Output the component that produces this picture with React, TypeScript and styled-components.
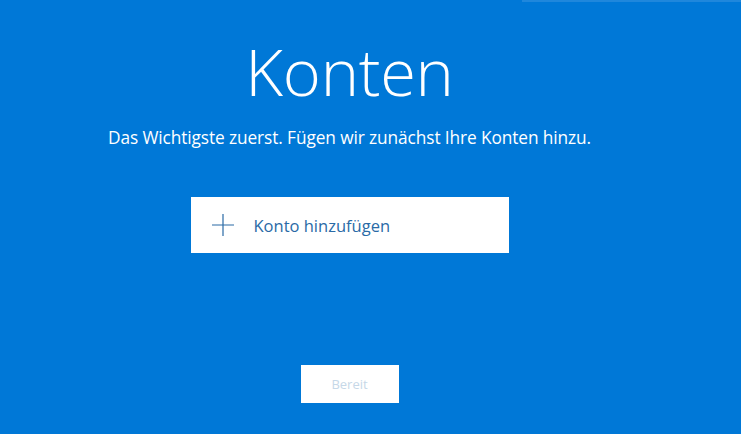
import React from 'react'
import styled, { createGlobalStyle } from 'styled-components'

const GlobalStyle = createGlobalStyle`
  html, body {
    margin: 0;
    padding: 0;
    background: #0078d7;
  }
  body {
    font-family: "Open Sans", "Noto Sans", sans-serif;
  }
`

const Screen = styled.div`
  position: relative;
  width: 741px;
  height: 434px;
  background: #0078d7;
  overflow: hidden;
`

const TopStrip = styled.div`
  position: absolute;
  top: 0;
  left: 522px;
  right: 0;
  height: 2px;
  background: #1f87dc;
`

const Column = styled.div`
  width: 699px;
  display: flex;
  flex-direction: column;
  align-items: center;
  padding-top: 28px;
`

const Title = styled.h1`
  margin: 0;
  font-family: "Open Sans", sans-serif;
  font-weight: 300;
  font-size: 65px;
  line-height: 86px;
  color: #ffffff;
  letter-spacing: -0.3px;
`

const Subtitle = styled.p`
  margin: 12px 0 0;
  font-size: 17.3px;
  line-height: 24px;
  color: #ffffff;
  letter-spacing: -0.1px;
`

const AddButton = styled.button`
  margin-top: 47px;
  width: 318px;
  height: 56px;
  border: none;
  background: #ffffff;
  display: flex;
  align-items: center;
  padding: 0 0 0 21px;
  gap: 20px;
  cursor: pointer;
  font-family: "Open Sans", sans-serif;
  font-size: 16.5px;
  color: #2a6aa6;
`

const Ready = styled.button<{ disabled?: boolean }>`
  margin-top: 112px;
  width: 98px;
  height: 38px;
  border: none;
  background: #ffffff;
  font-family: "Open Sans", sans-serif;
  font-size: 13px;
  color: ${(p) => (p.disabled ? '#c6d8e8' : '#0078d7')};
`

const PlusIcon = () => (
  <svg width="22" height="22" viewBox="0 0 22 22">
    <path d="M11 0 V22 M0 11 H22" stroke="#2a6aa6" strokeWidth="1.2" fill="none" />
  </svg>
)

export default function App() {
  return (
    <Screen>
      <GlobalStyle />
      <TopStrip />
      <Column>
        <Title>Konten</Title>
        <Subtitle>Das Wichtigste zuerst. Fügen wir zunächst Ihre Konten hinzu.</Subtitle>
        <AddButton>
          <PlusIcon />
          <span>Konto hinzufügen</span>
        </AddButton>
        <Ready disabled>Bereit</Ready>
      </Column>
    </Screen>
  )
}
